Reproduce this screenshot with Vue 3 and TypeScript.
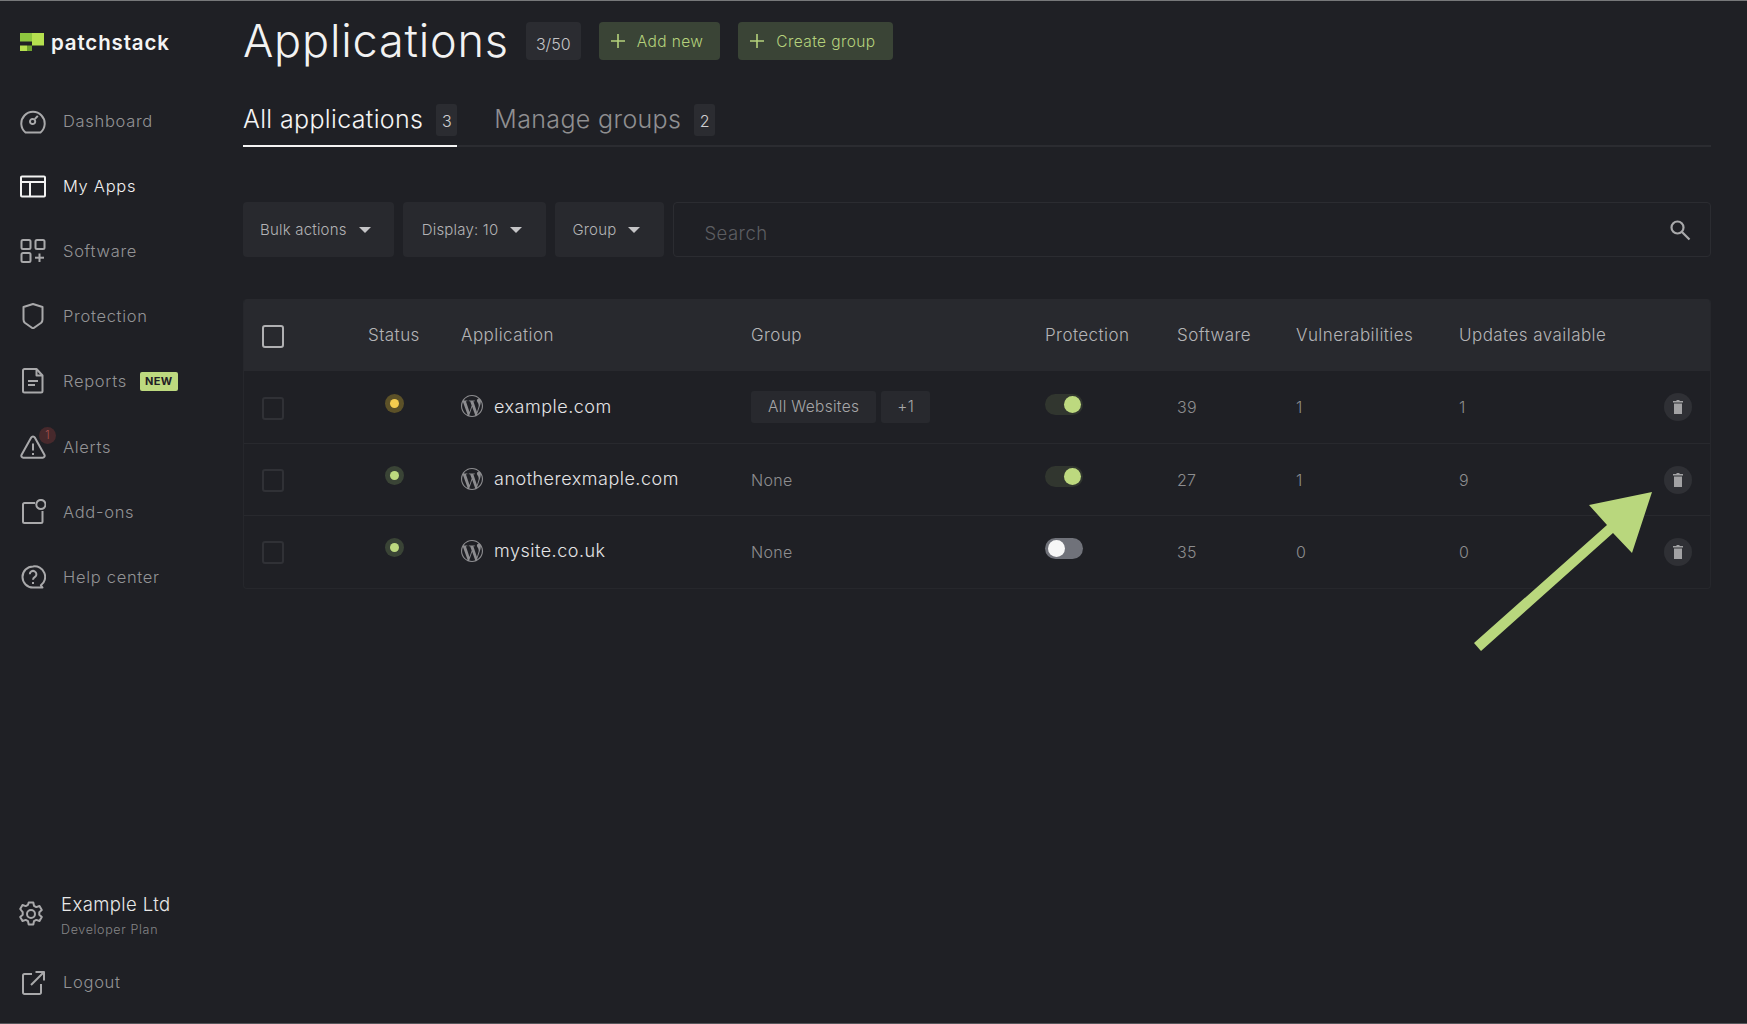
<script setup lang="ts">
interface NavItem { label: string; paths: string[]; active?: boolean; tag?: string; alert?: string }
interface Row { site: string; dot: string; groups: string[]; on: boolean; software: number; vulns: number; updates: number }

const nav: NavItem[] = [
  { label: 'Dashboard', paths: ['M5.5 24.5a11.7 11.7 0 1 1 15 0z', 'M14.8 11.2l3-3.4', 'M15.2 13.5a2.6 2.6 0 1 1-5.2 0a2.6 2.6 0 1 1 5.2 0z'] },
  { label: 'My Apps', active: true, paths: ['M2 3.5h22a1 1 0 0 1 1 1v18a1 1 0 0 1-1 1H2a1 1 0 0 1-1-1v-18a1 1 0 0 1 1-1z', 'M1 9h24', 'M10 9v14.5'] },
  { label: 'Software', paths: ['M3 2h6a1.5 1.5 0 0 1 1.5 1.5v6A1.5 1.5 0 0 1 9 11H3a1.5 1.5 0 0 1-1.5-1.5v-6A1.5 1.5 0 0 1 3 2z', 'M17 2h6a1.5 1.5 0 0 1 1.5 1.5v6A1.5 1.5 0 0 1 23 11h-6a1.5 1.5 0 0 1-1.5-1.5v-6A1.5 1.5 0 0 1 17 2z', 'M3 15h6a1.5 1.5 0 0 1 1.5 1.5v6A1.5 1.5 0 0 1 9 24H3a1.5 1.5 0 0 1-1.5-1.5v-6A1.5 1.5 0 0 1 3 15z', 'M19.5 15.5v8.5', 'M15 19.7h9'] },
  { label: 'Protection', paths: ['M13 1l9.5 3v12.5c0 1.3-.4 2.3-1.3 3.2L13 25.5l-8.2-5.8c-.9-.9-1.3-1.9-1.3-3.2V4z'] },
  { label: 'Reports', tag: 'NEW', paths: ['M4.5 1h12l6 6.5V23a1.5 1.5 0 0 1-1.5 1.5H4.5A1.5 1.5 0 0 1 3 23V2.5A1.5 1.5 0 0 1 4.5 1z', 'M16.5 1v6.5h6', 'M8 13h10', 'M8 17h7'] },
  { label: 'Alerts', alert: '1', paths: ['M11.2 3.5a2.1 2.1 0 0 1 3.6 0l9.6 17.2a2 2 0 0 1-1.8 3H3.4a2 2 0 0 1-1.8-3z', 'M13 9.5v7', 'M13 19v2'] },
  { label: 'Add-ons', paths: ['M15 4H4.5A1.5 1.5 0 0 0 3 5.5V22.5A1.5 1.5 0 0 0 4.5 24h16.5a1.5 1.5 0 0 0 1.5-1.5V12', 'M25.5 5.5a4.6 4.6 0 1 1-9.2 0a4.6 4.6 0 1 1 9.2 0z'] },
  { label: 'Help center', paths: ['M13 2.5a10.5 10.5 0 1 0 0 21h9.5l-1.6-2.200A10.5 10.5 0 0 0 13 2.500z', 'M9.8 10.2a3.3 3.3 0 1 1 5.2 2.7c-1.2.8-2 1.3-2 2.8', 'M13 18v2'] }
]

const rows: Row[] = [
  { site: 'example.com', dot: 'warn', groups: ['All Websites', '+1'], on: true, software: 39, vulns: 1, updates: 1 },
  { site: 'anotherexmaple.com', dot: 'ok', groups: [], on: true, software: 27, vulns: 1, updates: 9 },
  { site: 'mysite.co.uk', dot: 'ok', groups: [], on: false, software: 35, vulns: 0, updates: 0 }
]

const columns = ['Status', 'Application', 'Group', 'Protection', 'Software', 'Vulnerabilities', 'Updates available']
const filters = ['Bulk actions', 'Display: 10', 'Group']
const wp = 'M21.469 6.825c.84 1.537 1.318 3.3 1.318 5.175 0 3.979-2.156 7.456-5.363 9.325l3.295-9.527c.615-1.54.82-2.771.82-3.864 0-.405-.026-.78-.07-1.11m-7.981.105c.647-.03 1.232-.105 1.232-.105.582-.075.514-.93-.067-.899 0 0-1.755.135-2.88.135-1.064 0-2.85-.15-2.85-.15-.585-.03-.661.855-.075.885 0 0 .54.061 1.125.09l1.68 4.605-2.37 7.08L5.354 6.9c.649-.03 1.234-.1 1.234-.1.585-.075.516-.93-.065-.896 0 0-1.746.138-2.874.138-.2 0-.438-.008-.69-.015C4.911 3.15 8.235 1.215 12 1.215c2.809 0 5.365 1.072 7.286 2.833-.046-.003-.091-.009-.141-.009-1.06 0-1.812.923-1.812 1.914 0 .89.513 1.643 1.06 2.531.411.72.89 1.643.89 2.977 0 .915-.354 1.994-.821 3.479l-1.075 3.585-3.9-11.61.001.014zM12 22.784c-1.059 0-2.081-.153-3.048-.437l3.237-9.406 3.315 9.087c.024.053.05.101.078.149-1.12.393-2.325.609-3.582.609M1.211 12c0-1.564.336-3.05.935-4.39L7.29 21.709C3.694 19.96 1.212 16.271 1.211 12M12 0C5.385 0 0 5.385 0 12s5.385 12 12 12 12-5.385 12-12S18.615 0 12 0'
</script>

<template>
  <div class="shell">
    <aside class="side">
      <div class="logo">
        <svg width="24" height="18" viewBox="0 0 24 18">
          <path d="M0 0h12v8.5H0z" fill="#8dc63f" />
          <path d="M12 0h12v12.5H12z" fill="#b5e04f" />
          <path d="M0 12.5h7V18H0z" fill="#b5e04f" />
          <path d="M7 12.5h5V18H7z" fill="#6fa32e" />
        </svg>
        <span>patchstack</span>
      </div>
      <nav class="nav">
        <a v-for="item in nav" :key="item.label" class="nav-item" :class="{ active: item.active }">
          <span class="nav-icon">
            <svg width="26" height="26" viewBox="0 0 26 26" fill="none" stroke="currentColor" stroke-width="2" stroke-linejoin="round">
              <path v-for="d in item.paths" :key="d" :d="d" />
            </svg>
            <span v-if="item.alert" class="alert-dot">{{ item.alert }}</span>
          </span>
          <span>{{ item.label }}</span>
          <span v-if="item.tag" class="tag">{{ item.tag }}</span>
        </a>
      </nav>
      <div class="side-foot">
        <div class="org">
          <svg width="26" height="28" viewBox="0 0 26 28" fill="none" stroke="currentColor" stroke-width="2" stroke-linejoin="round">
            <path d="M10.7 1.5h4.6l.7 3.3 2.3 1.3 3.2-1.100 2.3 4-2.5 2.2v2.6l2.5 2.2-2.3 4-3.2-1.100-2.3 1.3-.7 3.3h-4.600l-.7-3.300-2.3-1.300-3.2 1.100-2.3-4 2.5-2.200v-2.600L2.200 8l2.300-4 3.200 1.100L10 3.800z" />
            <circle cx="13" cy="13" r="4" />
          </svg>
          <div class="org-text">
            <div class="org-name">Example Ltd</div>
            <div class="org-plan">Developer Plan</div>
          </div>
        </div>
        <a class="nav-item logout">
          <span class="nav-icon">
            <svg width="26" height="26" viewBox="0 0 26 26" fill="none" stroke="currentColor" stroke-width="2" stroke-linejoin="round">
              <path d="M12 5H4.5A1.5 1.5 0 0 0 3 6.5v17A1.5 1.5 0 0 0 4.5 25h15a1.5 1.5 0 0 0 1.5-1.5V15" />
              <path d="M11 16L23.5 3.5" />
              <path d="M15.5 3h8.5v8.5" />
            </svg>
          </span>
          <span>Logout</span>
        </a>
      </div>
    </aside>

    <main class="main">
      <header class="head">
        <h1>Applications</h1>
        <span class="count">3/50</span>
        <button class="add first">
          <svg width="14" height="14" viewBox="0 0 14 14" stroke="currentColor" stroke-width="1.6"><path d="M7 0v14M0 7h14" /></svg>
          Add new
        </button>
        <button class="add">
          <svg width="14" height="14" viewBox="0 0 14 14" stroke="currentColor" stroke-width="1.6"><path d="M7 0v14M0 7h14" /></svg>
          Create group
        </button>
      </header>

      <div class="tabs">
        <div class="tab current">All applications <span class="tab-num">3</span></div>
        <div class="tab">Manage groups <span class="tab-num">2</span></div>
      </div>

      <div class="filters">
        <div v-for="f in filters" :key="f" class="filter">
          <span>{{ f }}</span>
          <i class="caret"></i>
        </div>
        <div class="search">
          <span class="search-text">Search</span>
          <svg width="22" height="22" viewBox="0 0 22 22" fill="none" stroke="#a9a9ab" stroke-width="2.2">
            <circle cx="8.5" cy="8.5" r="6" />
            <path d="M13 13l7.5 7.5" />
          </svg>
        </div>
      </div>

      <section class="table">
        <div class="grid thead">
          <span class="box strong"></span>
          <span v-for="c in columns" :key="c">{{ c }}</span>
        </div>
        <div v-for="r in rows" :key="r.site" class="grid tr">
          <span class="box row-box"></span>
          <span class="dot" :class="r.dot"></span>
          <span class="site">
            <svg width="22" height="22" viewBox="0 0 24 24" fill="#8d8d90"><path :d="wp" /></svg>
            {{ r.site }}
          </span>
          <span class="groups">
            <template v-if="r.groups.length">
              <span v-for="g in r.groups" :key="g" class="chip">{{ g }}</span>
            </template>
            <template v-else>None</template>
          </span>
          <span class="toggle" :class="{ on: r.on }"><i></i></span>
          <span>{{ r.software }}</span>
          <span>{{ r.vulns }}</span>
          <span>{{ r.updates }}</span>
          <span class="trash">
            <svg width="10" height="14" viewBox="0 0 10 14" fill="#a2a2a4">
              <path d="M3.5 0h3v1H10v1.5H0V1h3.5zM1 3.5h8V14H1z" />
            </svg>
          </span>
        </div>
      </section>

      <svg class="arrow" width="190" height="170" viewBox="0 0 190 170">
        <path d="M189 7L169 68 150 48 18 166 11 158 144 40 126 20z" fill="#b9d77d" />
      </svg>
    </main>
  </div>
</template>

<style>
html, body { margin: 0; background: #1f2025; }
</style>

<style scoped>
.shell {
  box-sizing: border-box;
  display: flex;
  height: 1024px;
  overflow: hidden;
  border-top: 1px solid #77787a;
  border-bottom: 1px solid #55565a;
  background: #1f2025;
  color: #a3a3a5;
  font-family: Inter, "Liberation Sans", sans-serif;
  font-weight: 300;
}
.side {
  flex: none;
  width: 243px;
  display: flex;
  flex-direction: column;
  box-sizing: border-box;
  padding-top: 31px;
}
.logo {
  display: flex;
  align-items: center;
  gap: 7px;
  height: 20px;
  padding-left: 20px;
  color: #f4f4f4;
  font-size: 20.5px;
  font-weight: 600;
  letter-spacing: 0.85px;
}
.nav { display: flex; flex-direction: column; margin-top: 36px; }
.nav-item {
  display: flex;
  align-items: center;
  height: 65.2px;
  padding-left: 20px;
  font-size: 16.5px;
  letter-spacing: 0.7px;
  color: #939395;
}
.nav-item.active { color: #f2f2f2; }
.nav-icon {
  position: relative;
  display: flex;
  width: 26px;
  height: 26px;
  margin-right: 17px;
  color: #a9a9ab;
}
.active .nav-icon { color: #f2f2f2; }
.alert-dot {
  position: absolute;
  top: -7px;
  left: 19px;
  width: 17px;
  height: 17px;
  border-radius: 50%;
  background: #47292c;
  color: #a8514f;
  font-size: 11px;
  line-height: 17px;
  text-align: center;
  letter-spacing: 0;
}
.tag {
  margin-left: 13px;
  padding: 0 5px;
  height: 19px;
  border-radius: 2px;
  background: #bdd97f;
  color: #1f2025;
  font-size: 11px;
  font-weight: 700;
  line-height: 19px;
  letter-spacing: 0.4px;
}
.side-foot { margin-top: auto; padding-bottom: 8px; }
.org { display: flex; align-items: center; gap: 17px; padding-left: 18px; color: #a9a9ab; }
.org-name { color: #e8e8e8; font-size: 18.5px; letter-spacing: 0.4px; margin-bottom: 7px; }
.org-plan { color: #858587; font-size: 12.5px; letter-spacing: 0.65px; }
.logout { margin-top: 13px; }
.main {
  position: relative;
  flex: 1;
  min-width: 0;
  padding: 21px 36px 0 0;
}
.head { display: flex; align-items: center; height: 38px; }
h1 {
  margin: 0 17px 0 0;
  color: #f2f2f2;
  font-size: 45px;
  font-weight: 300;
  letter-spacing: 0.8px;
  line-height: 38px;
}
.count {
  width: 55px;
  height: 38px;
  border-radius: 4px;
  background: #2b2c31;
  color: #c5c5c7;
  font-size: 16px;
  line-height: 44px;
  text-align: center;
}
.add {
  display: flex;
  align-items: center;
  gap: 12px;
  height: 38px;
  margin-left: 18px;
  padding: 0 17px 0 12px;
  border: 0;
  border-radius: 4px;
  background: #3a4436;
  color: #b5d27c;
  font: inherit;
  font-size: 15.5px;
  letter-spacing: 0.4px;
}
.tabs {
  display: flex;
  gap: 37px;
  height: 41px;
  margin-top: 44px;
  border-bottom: 2px solid #2b2c31;
}
.tab {
  display: flex;
  align-items: flex-start;
  gap: 13px;
  height: 43px;
  box-sizing: border-box;
  color: #8f8f91;
  font-size: 25px;
  letter-spacing: 0.35px;
  line-height: 30px;
}
.tab.current { color: #f4f4f4; border-bottom: 2px solid #f4f4f4; }
.tab-num {
  width: 21px;
  height: 32px;
  border-radius: 3px;
  background: #2b2c31;
  color: #d0d0d2;
  font-size: 16px;
  line-height: 35px;
  text-align: center;
  letter-spacing: 0;
}
.filters { display: flex; gap: 9px; height: 55px; margin-top: 55px; }
.filter {
  display: flex;
  align-items: center;
  gap: 12px;
  padding: 0 23px 0 17px;
  border-radius: 4px;
  background: #28292e;
  color: #b3b3b5;
  font-size: 15px;
  letter-spacing: 0.2px;
}
.filter:nth-child(2) { padding: 0 24px 0 19px; }
.filter:nth-child(3) { padding-right: 24px; }
.caret {
  width: 0;
  height: 0;
  border-left: 6px solid transparent;
  border-right: 6px solid transparent;
  border-top: 6px solid #c5c5c7;
}
.search {
  flex: 1;
  display: flex;
  align-items: center;
  justify-content: space-between;
  padding: 0 19px 0 30px;
  border: 1px solid #2b2c31;
  border-radius: 4px;
}
.search-text { margin-top: 6px; color: #5c5d61; font-size: 18.5px; letter-spacing: 0.45px; }
.table {
  margin-top: 42px;
  border: 1px solid #26272c;
  border-top: 0;
  border-radius: 4px;
  overflow: hidden;
}
.grid {
  display: grid;
  grid-template-columns: 106px 93px 290px 294px 132px 119px 163px 1fr 46px;
  align-items: center;
  padding-left: 18px;
  font-size: 16px;
  letter-spacing: 0.3px;
}
.thead { height: 72px; background: #28292e; color: #b4b4b6; font-size: 17px; letter-spacing: 0.45px; }
.thead .box { margin-top: 3px; }
.tr { height: 72.2px; border-top: 1px solid #28292e; box-sizing: border-box; color: #8d8d8f; }
.thead + .tr { border-top: 0; }
.box {
  box-sizing: border-box;
  display: block;
  width: 22px;
  height: 23px;
  border: 2px solid #303136;
  border-radius: 3px;
}
.box.strong { border-color: #b0b0b2; }
.row-box { margin-top: 2px; }
.dot {
  position: relative;
  display: block;
  width: 19px;
  height: 19px;
  margin: -8px 0 0 17px;
  border-radius: 50%;
}
.dot::after {
  content: "";
  position: absolute;
  inset: 5px;
  border-radius: 50%;
}
.dot.warn { background: #5c5128; }
.dot.warn::after { background: #f4cc4f; }
.dot.ok { background: #3a4436; }
.dot.ok::after { background: #bdd97f; }
.site {
  display: flex;
  align-items: center;
  gap: 11px;
  margin-top: -2px;
  color: #e4e4e6;
  font-size: 18px;
  letter-spacing: 0.5px;
}
.groups { display: flex; gap: 5px; }
.chip {
  height: 32px;
  padding: 0 17px;
  border-radius: 3px;
  background: #28292e;
  color: #a6a6a8;
  font-size: 15.5px;
  line-height: 32px;
}
.chip:last-child { padding: 0 16px; }
.toggle {
  position: relative;
  display: block;
  width: 38px;
  height: 21px;
  margin-top: -6px;
  border-radius: 11px;
  background: #70727a;
}
.toggle i {
  position: absolute;
  top: 2px;
  left: 3px;
  width: 17px;
  height: 17px;
  border-radius: 50%;
  background: #f7f7f7;
}
.toggle.on { background: #31362f; }
.toggle.on i { left: auto; right: 2px; background: #bdd97f; }
.trash {
  display: flex;
  align-items: center;
  justify-content: center;
  width: 28px;
  height: 28px;
  border-radius: 50%;
  background: #2f3035;
}
.arrow {
  position: absolute;
  left: 1220px;
  top: 484px;
}
</style>
